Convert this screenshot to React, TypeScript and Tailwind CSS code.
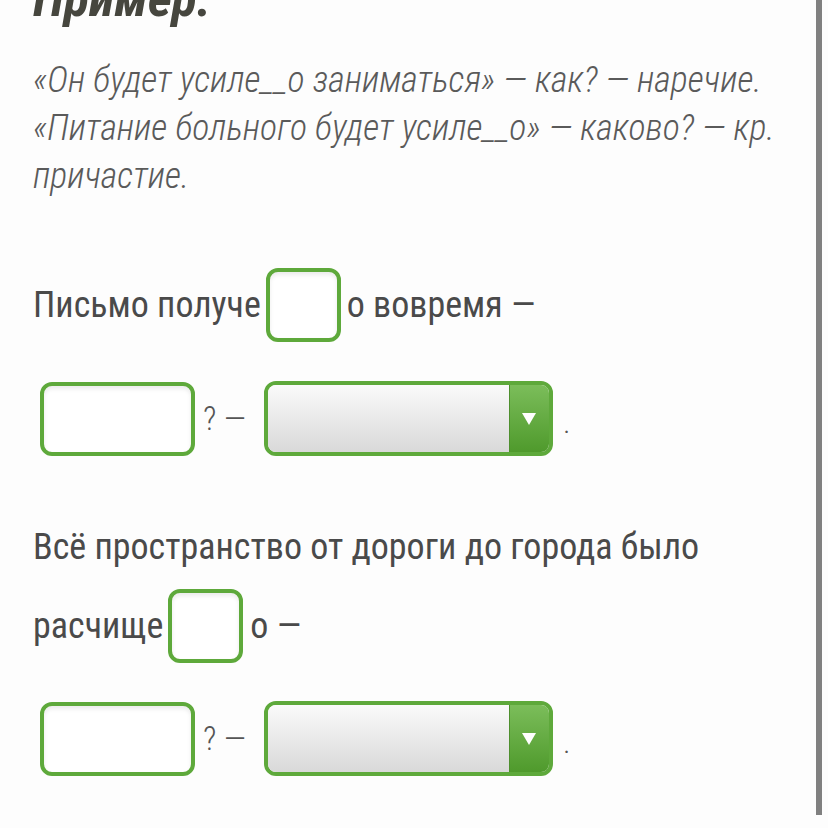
import React from "react";

const green = "border-[#5ea93b]";

function SmallBox() {
  return (
    <div className={`w-[75px] h-[74px] rounded-[12px] border-[4px] ${green} bg-white shadow-[inset_0_3px_4px_rgba(0,0,0,0.08)] shrink-0`} />
  );
}

function WideBox() {
  return (
    <div className={`w-[155px] h-[74px] rounded-[12px] border-[4px] ${green} bg-white shadow-[inset_0_3px_4px_rgba(0,0,0,0.08)] shrink-0`} />
  );
}

function Select() {
  return (
    <div className={`w-[289px] h-[75px] rounded-[12px] border-[4px] ${green} flex overflow-hidden shrink-0`}>
      <div className="flex-1 bg-[linear-gradient(to_bottom,#fafafa,#d9d9d9)]" />
      <div className="w-[40px] bg-[linear-gradient(to_bottom,#7bbd5a,#4f9a2c)] flex items-center justify-center border-l border-[#4e8f2e]">
        <svg width="14" height="12" viewBox="0 0 14 12">
          <polygon points="0,0 14,0 7,12" fill="#ffffff" />
        </svg>
      </div>
    </div>
  );
}

export default function App() {
  const font = "font-['Roboto_Condensed',Roboto,sans-serif]";
  return (
    <div className={`w-[828px] h-[828px] bg-[#fdfdfd] overflow-hidden relative ${font}`}>
      <div className="absolute right-[6px] top-0 w-[6px] h-[815px] bg-[#808080]" />
      <div className="pl-[33px]">
        <div className="mt-[-26px] h-[50px] text-[52px] leading-[50px] font-bold italic text-[#46463e]">
          Пример.
        </div>
        <div className="mt-[32px] text-[36px] leading-[48px] font-light italic text-[#5a5a5a] font-['Roboto_Condensed_Light','Roboto_Condensed',Roboto,sans-serif]">
          <div>«Он будет усиле__о заниматься» — как? — наречие.</div>
          <div>«Питание больного будет усиле__о» — каково? — кр.</div>
          <div>причастие.</div>
        </div>

        <div className="mt-[68px] flex items-center h-[74px] text-[36px] text-[#4a4a4a]">
          <span>Письмо получе</span>
          <span className="ml-[5px]"><SmallBox /></span>
          <span className="ml-[6px]">о вовремя —</span>
        </div>

        <div className="mt-[39px] pl-[7px] flex items-center h-[75px] text-[#555555]">
          <WideBox />
          <span className="ml-[8px] text-[33px] font-light">? —</span>
          <span className="ml-[18px]"><Select /></span>
          <span className="ml-[11px] text-[22px] mt-[14px]">.</span>
        </div>

        <div className="mt-[71px] text-[36px] leading-[40px] text-[#4a4a4a]">
          Всё пространство от дороги до города было
        </div>

        <div className="mt-[22px] flex items-center h-[74px] text-[36px] text-[#4a4a4a]">
          <span>расчище</span>
          <span className="ml-[5px]"><SmallBox /></span>
          <span className="ml-[7px]">о —</span>
        </div>

        <div className="mt-[38px] pl-[7px] flex items-center h-[75px] text-[#555555]">
          <WideBox />
          <span className="ml-[8px] text-[33px] font-light">? —</span>
          <span className="ml-[18px]"><Select /></span>
          <span className="ml-[11px] text-[22px] mt-[14px]">.</span>
        </div>
      </div>
    </div>
  );
}
